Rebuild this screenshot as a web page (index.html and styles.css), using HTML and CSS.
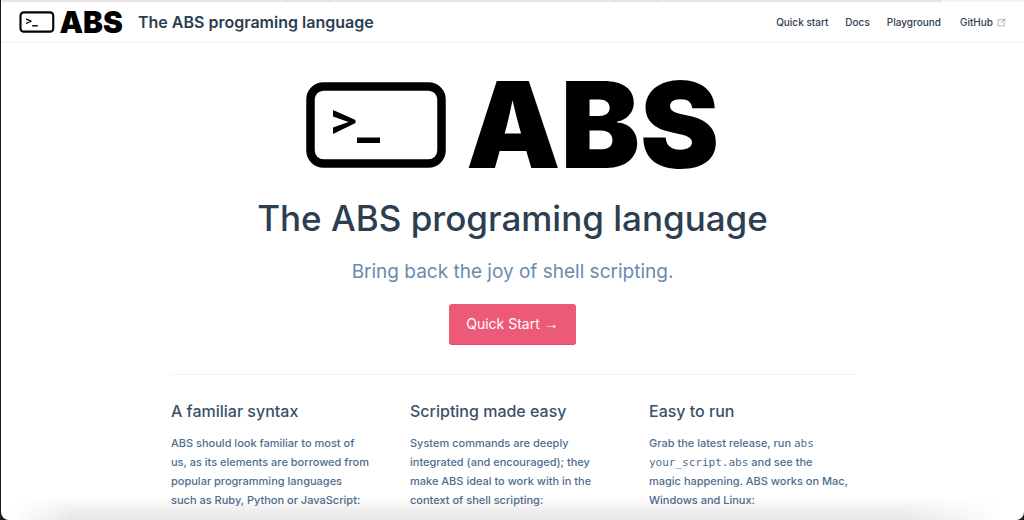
FILE: index.html
```html
<!DOCTYPE html>
<html lang="en">
<head>
<meta charset="utf-8">
<meta name="viewport" content="width=device-width, initial-scale=1">
<title>The ABS programing language</title>
<link rel="stylesheet" href="styles.css">
</head>
<body>
<div class="window">
  <div class="tab-strip"><div class="tabs"></div></div>
  <header class="navbar">
    <a class="brand" href="#">
      <svg class="brand-logo" viewBox="0 0 413 88" role="img" aria-label="ABS">
        <rect x="4.500" y="5.500" width="131" height="77" rx="13" fill="none" stroke="#000" stroke-width="8.500"/>
        <path d="M27 29v6.500l15.500 5.500L27 46.500V53l22.500-11v-3z"/>
        <path d="M51 56.500h23v5.500H51z"/>
        <text class="logo-text" x="160" y="87">ABS</text>
      </svg>
      <span class="brand-name">The ABS programing language</span>
    </a>
    <nav class="links">
      <a href="#start">Quick start</a>
      <a href="#docs">Docs</a>
      <a href="#play">Playground</a>
      <a class="external" href="#github">GitHub
        <svg class="external-icon" viewBox="0 0 100 100" aria-hidden="true"><path d="M18.800 85.100h56c2.200 0 4-1.800 4-4v-32h-8v28h-48v-48h28v-8h-32c-2.200 0-4 1.800-4 4v56c0 2.200 1.800 4 4 4z"/><path d="M45.700 48.700 51.300 54.300 77.200 28.500V43.900h8V14.900h-29v8h15.200z"/></svg>
      </a>
    </nav>
  </header>
  <main class="home">
    <section class="hero">
      <svg class="hero-logo" viewBox="0 0 413 88" role="img" aria-label="ABS">
        <rect x="4.500" y="5.500" width="131" height="77" rx="13" fill="none" stroke="#000" stroke-width="8.500"/>
        <path d="M27 29v6.500l15.500 5.500L27 46.500V53l22.500-11v-3z"/>
        <path d="M51 56.500h23v5.500H51z"/>
        <text class="logo-text" x="160" y="87">ABS</text>
      </svg>
      <h1 class="title">The ABS programing language</h1>
      <p class="tagline">Bring back the joy of shell scripting.</p>
      <a class="action" href="#start">Quick Start <span class="arrow">→</span></a>
    </section>
    <section class="features">
      <article><h2>A familiar syntax</h2><p>ABS should look familiar to most of us, as its elements are borrowed from popular programming languages such&nbsp;as Ruby, Python or JavaScript:</p></article>
      <article><h2>Scripting made easy</h2><p>System commands are deeply integrated (and encouraged); they make ABS ideal to work with in the context of shell scripting:</p></article>
      <article><h2>Easy to run</h2><p>Grab the latest release, run <code>abs your_script.abs</code> and see the magic&nbsp;happening. ABS works on Mac, Windows and Linux:</p></article>
    </section>
  </main>
  <div class="edge-shade"></div>
</div>
</body>
</html>
```
FILE: styles.css
```css
* { box-sizing: border-box; }
body {
  margin: 0;
  background: #1c1c20;
  color: #2c3e50;
  font-family: Inter, "Liberation Sans", sans-serif;
}
a { color: inherit; text-decoration: none; }
h1, h2, p { margin: 0; }
.logo-text { font: 900 119px Inter, sans-serif; }
.window {
  position: relative;
  min-height: 100vh;
  margin-left: 1px;
  overflow: hidden;
  background: #fff;
  border-radius: 0 0 8px 8px;
}
.tab-strip { height: 2px; background: #f7f2f4; }
.tabs {
  width: 92%;
  height: 100%;
  background: repeating-linear-gradient(90deg, #e9e3e5 0 40px, #d9d3d5 40px 41px);
}
.navbar {
  display: flex;
  align-items: center;
  justify-content: space-between;
  height: 41px;
  padding: 0 17px 0 18px;
  border-bottom: 1px solid #eff1f3;
}
.brand { display: flex; align-items: center; gap: 15px; }
.brand-logo { width: 104px; height: 22px; overflow: visible; }
.brand-name { font-size: 16px; font-weight: 600; }
.links { display: flex; gap: 17px; font-size: 10px; font-weight: 500; }
.external { display: flex; align-items: center; gap: 3px; margin-left: 2px; }
.external-icon { width: 11px; height: 11px; fill: #aaa; }
.home { max-width: 683px; margin: 0 auto; }
.hero {
  display: flex;
  flex-direction: column;
  align-items: center;
  padding: 38px 0 29px;
  border-bottom: 1px solid #eff1f3;
}
.hero-logo { width: 413px; height: 88px; overflow: visible; }
.title { margin-top: 27px; font-size: 35px; font-weight: 500; line-height: 44px; }
.tagline { margin-top: 20px; color: #6a8bad; font-size: 19px; line-height: 24px; }
.action {
  margin-top: 20px;
  padding: 0 17px;
  color: #fff;
  background: #ed5a78;
  border-bottom: 1px solid #d94f6d;
  border-radius: 3px;
  font-size: 14px;
  line-height: 40px;
}
.arrow { font-family: "Liberation Sans", sans-serif; font-size: 15px; line-height: 1; }
.features {
  display: grid;
  grid-template-columns: repeat(3, 1fr);
  gap: 34px;
  padding: 26px 0 10px;
}
.features h2 { color: #3a5169; font-size: 16px; font-weight: 500; line-height: 20px; }
.features p { max-width: 201px; margin-top: 13px; color: #4e6e8e; font-size: 11px; font-weight: 500; line-height: 19px; }
.features code { font-family: "DejaVu Sans Mono", monospace; font-size: 11px; font-weight: 400; line-height: 1; }
.edge-shade {
  position: absolute;
  inset: auto 0 0;
  height: 24px;
  background: linear-gradient(transparent, rgba(0, 0, 0, 0.1));
  mask-image: linear-gradient(90deg, transparent 1%, #000 7%, #000 88%, transparent 98%);
  pointer-events: none;
}
```
